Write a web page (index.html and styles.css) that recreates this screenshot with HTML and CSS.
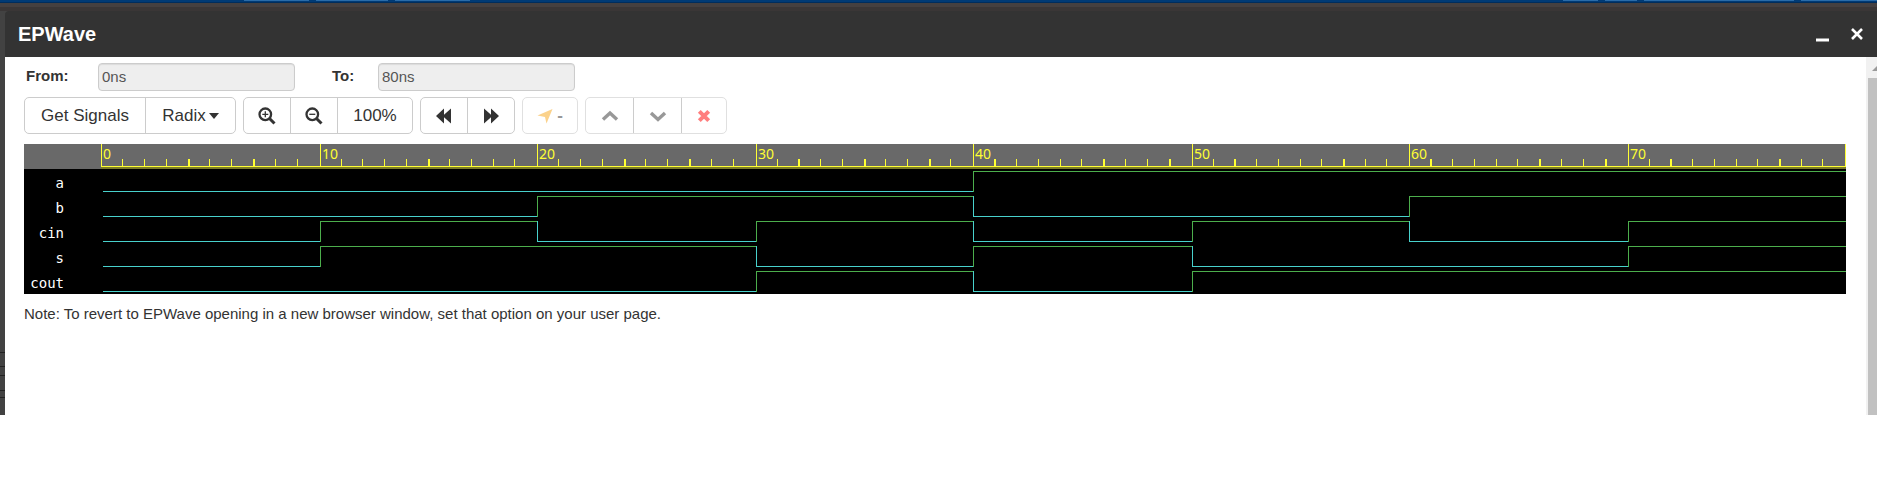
FILE: index.html
```html
<!DOCTYPE html>
<html lang="en">
<head>
<meta charset="utf-8">
<title>EPWave</title>
<link rel="stylesheet" href="styles.css">
</head>
<body>
<div class="backdrop">
  <div class="navbar"><i class="tab t1"></i><i class="tab t2"></i><i class="tab t3"></i><i class="push"></i><i class="tab t4"></i><i class="tab t5"></i><i class="tab t6"></i><i class="tab t7"></i></div>
  <section class="dialog">
    <header class="titlebar">
      <h1 class="title">EPWave</h1>
      <button class="win" aria-label="Minimize"><svg width="14" height="16"><path d="M0 14h13" stroke="#fff" stroke-width="3"/></svg></button>
      <button class="win" aria-label="Close"><svg width="14" height="16"><path d="M2 3l10 10M12 3L2 13" stroke="#fff" stroke-width="2.6"/></svg></button>
    </header>
    <div class="content">
      <main class="main">
        <form class="range">
          <label class="lbl" for="from">From:</label><input class="field" id="from" value="0ns" readonly>
          <label class="lbl to" for="to">To:</label><input class="field" id="to" value="80ns" readonly>
        </form>
        <div class="toolbar">
          <div class="group"><button class="btn signals">Get Signals</button><button class="btn radix">Radix<i class="caret"></i></button></div>
          <div class="group">
            <button class="btn icon first" aria-label="Zoom in"><svg width="18" height="18"><g fill="none" stroke="#333"><circle cx="7.3" cy="7.3" r="5.8" stroke-width="2.3"/><path d="M11.5 11.5l5 5" stroke-width="3"/><path d="M4.3 7.3h6M7.3 4.3v6" stroke-width="1.3"/></g></svg></button>
            <button class="btn icon" aria-label="Zoom out"><svg width="18" height="18"><g fill="none" stroke="#333"><circle cx="7.3" cy="7.3" r="5.8" stroke-width="2.3"/><path d="M11.5 11.5l5 5" stroke-width="3"/><path d="M4.3 7.3h6" stroke-width="1.3"/></g></svg></button>
            <button class="btn pct">100%</button>
          </div>
          <div class="group">
            <button class="btn icon first" aria-label="Previous edge"><svg width="18" height="18"><path d="M9 1.5v6.2l7-6.2v15l-7-6.2v6.2L1 9z" fill="#333"/></svg></button>
            <button class="btn icon" aria-label="Next edge"><svg width="18" height="18"><path d="M9 1.5v6.2L2 1.5v15l7-6.2v6.2L17 9z" fill="#333"/></svg></button>
          </div>
          <div class="group off"><button class="btn cursor" disabled><svg width="16" height="16"><path d="M15.5 1L9.5 15.5 8 9 .5 7.5z" fill="#f9a61a"/></svg><b>-</b></button></div>
          <div class="group off">
            <button class="btn icon" aria-label="Move up" disabled><svg width="18" height="18"><path d="M2 12.5l7-6.5 7 6.5" fill="none" stroke="#333" stroke-width="3.4"/></svg></button>
            <button class="btn icon wide" aria-label="Move down" disabled><svg width="18" height="18"><path d="M2 6l7 6.5L16 6" fill="none" stroke="#333" stroke-width="3.4"/></svg></button>
            <button class="btn remove" aria-label="Remove" disabled><svg width="18" height="18"><path d="M4.3 4.3l9.4 9.4M13.7 4.3l-9.4 9.4" stroke="#f00" stroke-width="4"/></svg></button>
          </div>
        </div>
        <div class="wave" id="wave"></div>
        <p class="note">Note: To revert to EPWave opening in a new browser window, set that option on your user page.</p>
      </main>
      <div class="scroll"><i class="arrow"></i><i class="thumb"></i></div>
    </div>
  </section>
</div>
<script src="wave.js"></script>
</body>
</html>
```
FILE: styles.css
```css
* { box-sizing: border-box; }
body { margin: 0; background: #fff; color: #333; font-family: "Liberation Sans", Arial, sans-serif; font-size: 15px; line-height: 20px; overflow-x: hidden; }
.backdrop { background: linear-gradient(transparent 352px, #222 352px 353px, transparent 353px 366px, #222 366px 367px, transparent 367px 375px, #222 375px 376px, transparent 376px 390px, #222 390px 391px, transparent 391px 397px, #222 397px 398px, transparent 398px), #424242; }
.navbar { height: 11px; display: flex; align-items: flex-start; gap: 7px; padding-left: 244px; background: linear-gradient(#003a75 0 2px, #002d5c 2px 3px, #454040 3px 7px, #3a3636 7px); }
.tab { height: 1px; background: #2a6ba8; }
.t1 { width: 65px; } .t2 { width: 72px; } .t3 { width: 75px; } .push { flex: 1; }
.t4 { width: 35px; } .t5 { width: 32px; } .t6 { width: 150px; } .t7 { width: 76px; }
.dialog { margin-left: 5px; }
.titlebar { display: flex; align-items: center; gap: 20px; height: 46px; padding: 0 13px; background: #333; border-top-left-radius: 4px; }
.title { flex: 1; margin: 0; color: #fff; font-size: 20px; line-height: 24px; }
.win { display: flex; padding: 0; border: 0; background: none; }
.content { display: flex; min-height: 358px; background: #fff; }
.main { flex: 1; min-width: 0; padding: 6px 20px 0 19px; }
.range { display: flex; }
.lbl { width: 74px; padding-left: 2px; line-height: 26px; font-weight: bold; }
.lbl.to { width: 46px; margin-left: 37px; padding: 0; }
.field { width: 197px; height: 28px; padding: 0 3px 2px; border: 1px solid #ccc; border-radius: 4px; background: #eee; box-shadow: inset 0 1px 1px rgba(0,0,0,.08); color: #555; font: inherit; }
.toolbar { display: flex; gap: 7px; margin-top: 6px; }
.group { display: flex; height: 37px; border: 1px solid #ccc; border-radius: 5px; }
.off { border-color: #e0e0e0; }
.btn { display: flex; align-items: center; justify-content: center; padding: 0; border: 0; background: none; color: #333; font-family: inherit; font-size: 17px; }
.btn + .btn { border-left: 1px solid #ccc; }
.signals { width: 120px; }
.radix { width: 90px; }
.caret { margin-left: 3px; border: 5px solid transparent; border-top: 6px solid #333; border-bottom: 0; }
.icon { width: 47px; }
.first { width: 46px; }
.pct { width: 75px; }
.cursor { width: 54px; gap: 4px; }
.wide { width: 48px; }
.remove { width: 45px; }
.off svg, .off b { opacity: .5; }
.wave { margin-top: 10px; background: #000; font-family: "DejaVu Sans Mono", monospace; font-size: 14px; }
.line { display: grid; grid-template-columns: 77px 1fr; height: 25px; }
.name { width: 40px; padding-top: 4px; color: #fff; text-align: right; line-height: 20px; }
.cells { display: grid; grid-template-columns: 219fr 217fr 219fr 217fr 219fr 217fr 219fr 218fr; min-width: 0; }
.ruler { background: #696969; }
.ruler .cells { height: 23px; border-bottom: 1px solid #ff3; box-shadow: 0 2px #7a7a28; }
.step { position: relative; border-left: 1px solid #ff3; }
.step:last-child { border-right: 1px solid #ff3; }
.num { position: absolute; left: 1px; top: 0; color: #ff3; line-height: 20px; font-family: "Noto Sans", sans-serif; font-size: 14px; }
.ticks { display: grid; grid-template-columns: repeat(10, 1fr); height: 22px; margin: 0 1px 0 -2px; align-items: end; }
.ticks i { height: 7px; border-left: 1px solid #ff3; }
.ticks i:first-child { border: 0; }
.ticks .thick { border-left-width: 2px; }
.level { height: 21px; margin-top: 2px; }
.hi { border-top: 1px solid #4cae4c; }
.lo { border-bottom: 1px solid #48d1cc; }
.hi.edge { border-left: 1px solid #4cae4c; }
.lo.edge { border-left: 1px solid #48d1cc; }
.level:first-child { margin-left: 2px; }
.note { margin: 10px 0 0; }
.scroll { display: flex; flex-direction: column; width: 11px; overflow: hidden; padding-left: 2px; background: #f1f1f1; }
.arrow { flex: none; width: 0; margin: 9px 0 7px 4px; border: 5px solid transparent; border-top: 0; border-bottom-color: #999; }
.thumb { flex: 1; background: #c1c1c1; }
```
FILE: wave.js
```js
const signals = { a: "00001111", b: "00110011", cin: "01010101", s: "01101001", cout: "00010111" };
const thick = [4, 7, 15, 24, 27, 32, 35, 38, 41, 46, 49, 52, 57, 61, 66, 69, 72, 77];

const line = (name, cells, cls = "") =>
  `<div class="line ${cls}"><span class="name">${name}</span><div class="cells">${cells}</div></div>`;

const steps = [...Array(8).keys()].map(s => {
  const ticks = [...Array(10).keys()].map(t => `<i class="${thick.includes(s * 10 + t) ? "thick" : ""}"></i>`);
  return `<div class="step"><span class="num">${s * 10}</span><div class="ticks">${ticks.join("")}</div></div>`;
});

const rows = Object.entries(signals).map(([name, bits]) =>
  line(name, [...bits].map((b, i) =>
    `<i class="level ${b === "1" ? "hi" : "lo"} ${i && bits[i - 1] !== b ? "edge" : ""}"></i>`).join("")));

document.getElementById("wave").innerHTML = line("", steps.join(""), "ruler") + rows.join("");
```
